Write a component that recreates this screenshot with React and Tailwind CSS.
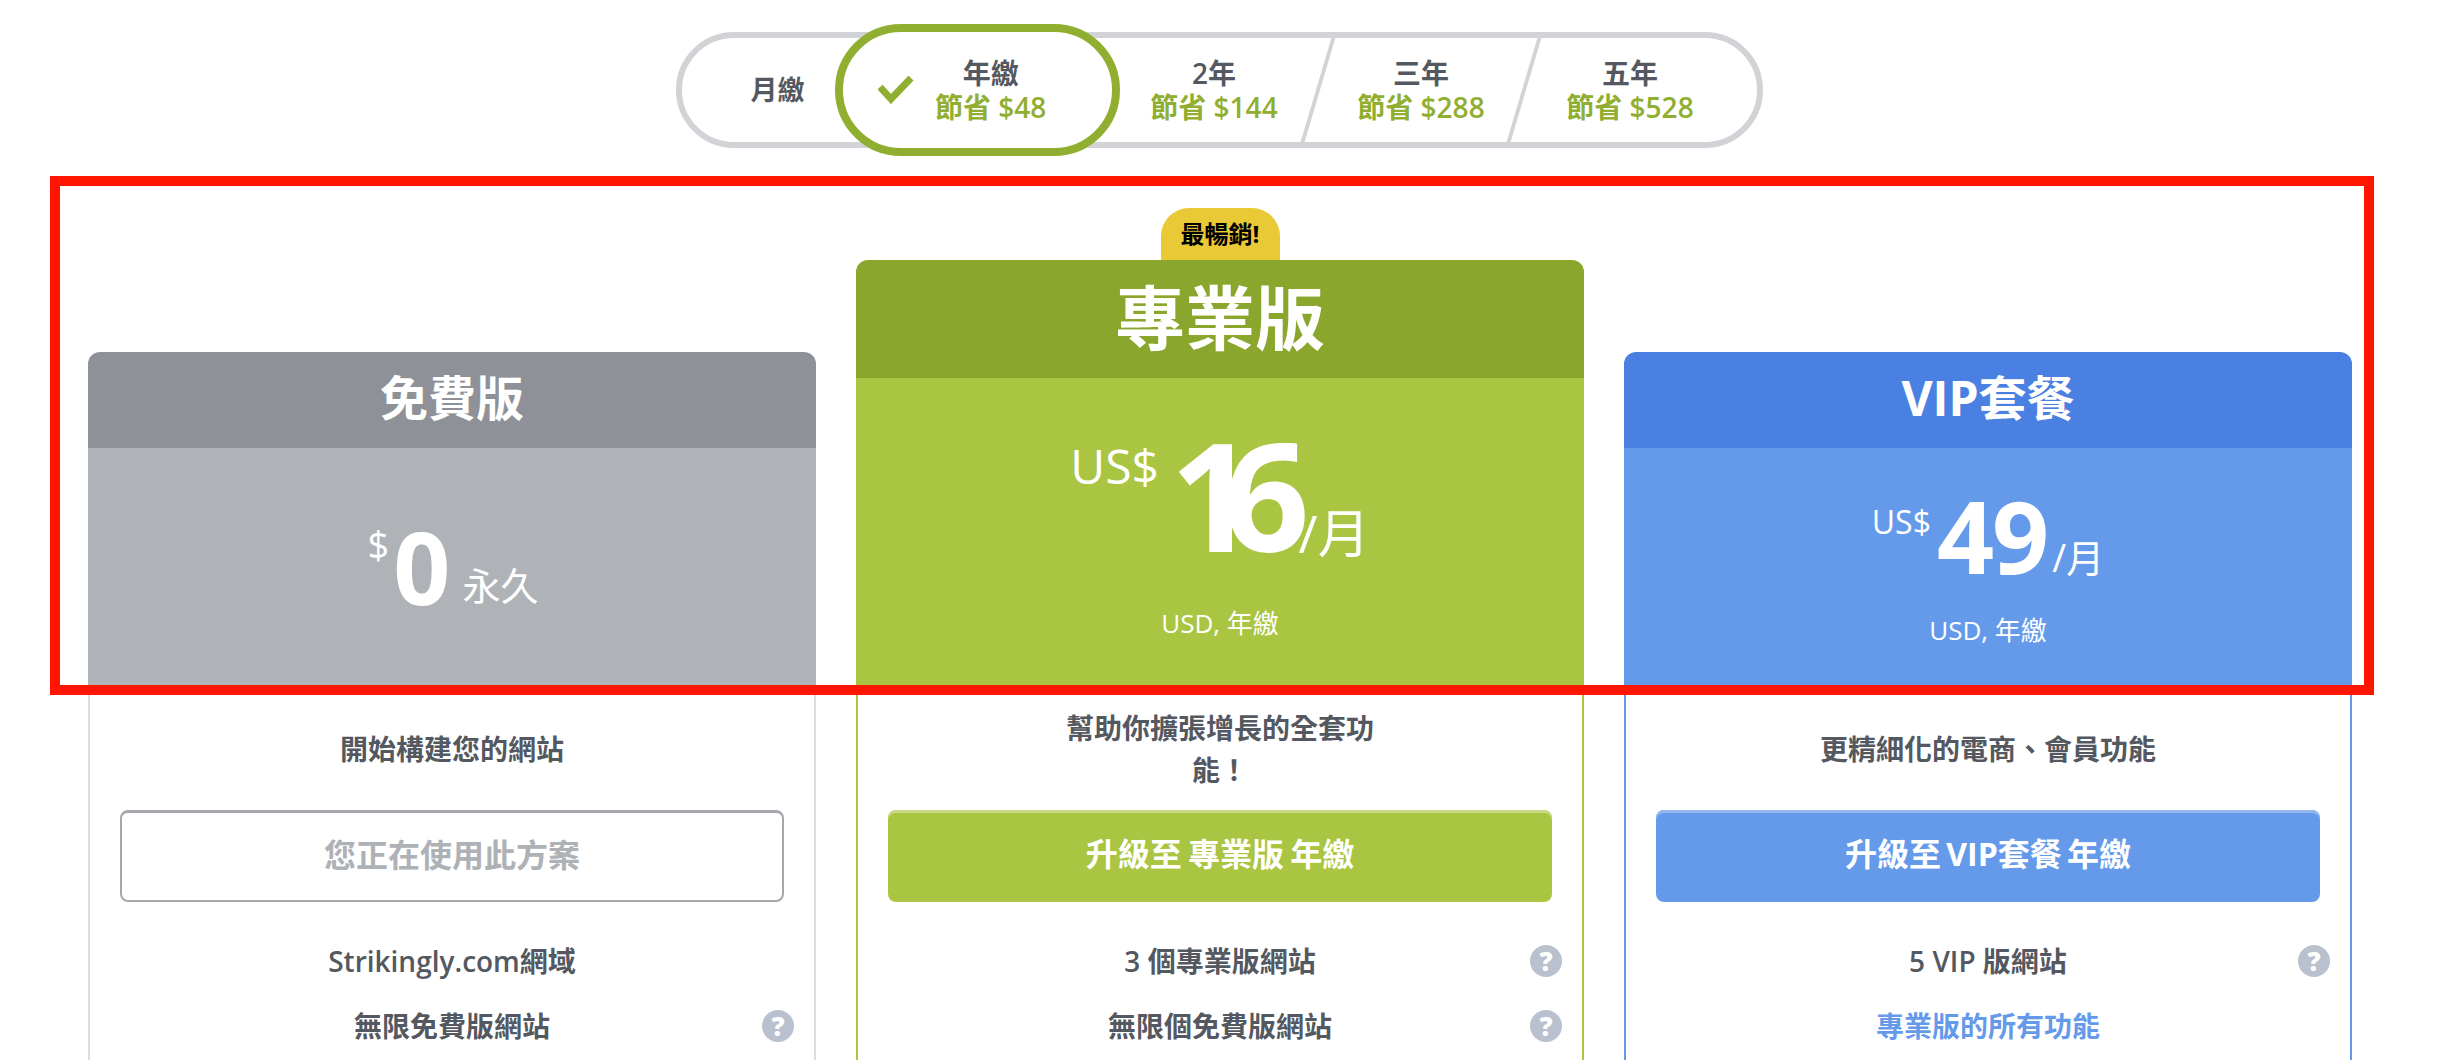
import React from 'react';

const FONT = "font-['Open_Sans','Noto_Sans_CJK_TC',sans-serif]";

function Help() {
  return <span className="absolute right-[20px] top-1/2 -translate-y-1/2 w-[32px] h-[32px] rounded-full bg-[#b9c0ce] text-white text-[26px] leading-[32px] font-extrabold text-center">?</span>;
}

function Row({ children, help, className = 'text-[#545860]' }) {
  return <div className={`relative h-[65px] flex items-center justify-center text-[28px] font-semibold ${className}`}>
      {children}
      {help && <Help />}
    </div>;
}

function Period({ top, save }) {
  return <div className="flex flex-col items-center text-[28px] leading-[34px] font-semibold">
      <span className="text-[#545860]">{top}</span>
      <span className="text-[#90ae2f]">{save}</span>
    </div>;
}

function Slash() {
  return <div className="w-[4px] self-stretch bg-[#d2d3d7] skew-x-[-16.5deg]"></div>;
}

function Toggle() {
  return <div className="ml-[676px] w-[1087px] h-[116px] border-[6px] border-[#d2d3d7] rounded-[58px] flex items-center bg-white">
      <div className="w-[153px] pl-[38px] flex justify-center text-[27px] font-semibold text-[#545860]">月繳</div>
      <div className="w-[285px] h-[132px] -my-[14px] border-[8px] border-[#90ae2f] rounded-[66px] bg-white flex items-center pl-[35px] gap-[21px]">
        <svg width="36" height="28" viewBox="0 0 36 28" fill="none" stroke="#90ae2f" strokeWidth="7">
          <polyline points="2,11 13,23 33,2" />
        </svg>
        <Period top="年繳" save="節省 $48" />
      </div>
      <div className="w-[196px] flex justify-center pr-[8px]"><Period top="2年" save="節省 $144" /></div>
      <Slash />
      <div className="w-[202px] flex justify-center"><Period top="三年" save="節省 $288" /></div>
      <Slash />
      <div className="flex-1 flex justify-center pr-[23px]"><Period top="五年" save="節省 $528" /></div>
    </div>;
}

function FreeCard() {
  return <div className="pt-[144px]">
      <div className="h-[96px] pb-[5px] bg-[#8e9298] rounded-t-[12px] flex items-center justify-center text-white text-[48px] font-bold">免費版</div>
      <div className="h-[244px] bg-[#afb2b6] text-white flex items-start justify-center pt-[48px] pl-[2px]">
        <span className="text-[38px] leading-[40px] mt-[28px]">$</span>
        <span className="text-[100px] leading-[136px] font-bold ml-[4px] mt-[2px]">0</span>
        <span className="text-[38px] leading-[50px] mt-[64px] ml-[12px]">永久</span>
      </div>
      <div className="border-x-2 border-[#dddddd] px-[30px] h-[400px]">
        <div className="h-[114px] mb-[4px] flex items-center justify-center text-[28px] font-semibold text-[#545860]">開始構建您的網站</div>
        <div className="h-[92px] pb-[4px] border-2 border-t-[3px] border-[#a5a8ac] rounded-[8px] flex items-center justify-center text-[32px] font-bold text-[#aeb1b5]">您正在使用此方案</div>
        <div className="mt-[26px] -mx-[30px]">
          <Row>Strikingly.com網域</Row>
          <Row help>無限免費版網站</Row>
        </div>
      </div>
    </div>;
}

function ProCard() {
  return <div>
      <div className="mx-auto w-[119px] h-[52px] bg-[#eac936] rounded-t-[28px] flex items-center justify-center text-[24px] font-bold text-black">最暢銷!</div>
      <div className="h-[118px] pb-[2px] bg-[#8ba62c] rounded-t-[12px] flex items-center justify-center text-white text-[70px] font-bold">專業版</div>
      <div className="h-[314px] bg-[#a9c542] text-white flex flex-col items-center pt-[34px]">
        <div className="flex items-start h-[150px]">
          <span className="text-[48px] leading-[60px] mt-[24px]">US$</span>
          <span className="text-[150px] leading-[150px] font-bold tracking-[-32px] ml-[11px] mt-[7px]">16</span>
          <span className="text-[52px] leading-[60px] mt-[91px] ml-[21px]">/月</span>
        </div>
        <div className="mt-[43px] text-[26px] leading-[36px]">USD, 年繳</div>
      </div>
      <div className="border-x-2 border-[#a9c542] px-[30px] h-[400px]">
        <div className="h-[114px] mb-[4px] flex items-center justify-center">
          <p className="w-[320px] text-center text-[28px] leading-[42px] font-semibold text-[#545860]">幫助你擴張增長的全套功能！</p>
        </div>
        <div className="h-[92px] pb-[4px] bg-[#a9c542] rounded-[8px] shadow-[inset_0_3px_0_#c6d987] flex items-center justify-center text-[32px] font-bold text-white [word-spacing:-2px]">升級至 專業版 年繳</div>
        <div className="mt-[26px] -mx-[30px]">
          <Row help>3 個專業版網站</Row>
          <Row help>無限個免費版網站</Row>
        </div>
      </div>
    </div>;
}

function VipCard() {
  return <div className="pt-[144px]">
      <div className="h-[96px] pb-[5px] bg-[#4a80e2] rounded-t-[12px] flex items-center justify-center text-white text-[48px] font-bold">VIP套餐</div>
      <div className="h-[244px] bg-[#659aea] text-white flex flex-col items-center pt-[29px]">
        <div className="flex items-start h-[110px]">
          <span className="text-[32px] leading-[44px] mt-[23px]">US$</span>
          <span className="text-[100px] leading-[110px] font-bold ml-[6px] mt-[3px] tracking-[-2px]">49</span>
          <span className="text-[38px] leading-[48px] mt-[56px] ml-[5px]">/月</span>
        </div>
        <div className="mt-[25px] text-[26px] leading-[36px]">USD, 年繳</div>
      </div>
      <div className="border-x-2 border-[#659aea] px-[30px] h-[400px]">
        <div className="h-[114px] mb-[4px] flex items-center justify-center text-[28px] font-semibold text-[#545860]">更精細化的電商、會員功能</div>
        <div className="h-[92px] pb-[4px] bg-[#659aea] rounded-[8px] shadow-[inset_0_3px_0_#93b8f0] flex items-center justify-center text-[32px] font-bold text-white [word-spacing:-3px]">升級至 VIP套餐 年繳</div>
        <div className="mt-[26px] -mx-[30px]">
          <Row help>5 VIP 版網站</Row>
          <Row className="text-[#659aea]">專業版的所有功能</Row>
        </div>
      </div>
    </div>;
}

export default function App() {
  return <div className={`relative h-[1060px] overflow-hidden bg-white pt-[32px] ${FONT}`}>
      <Toggle />
      <div className="mt-[60px] grid grid-cols-3 gap-10 pl-[88px] pr-[104px]">
        <FreeCard />
        <ProCard />
        <VipCard />
      </div>
      {/* 红色标注框 */}
      <div className="absolute left-[50px] top-[176px] w-[2324px] h-[519px] border-[10px] border-[#ff1500] pointer-events-none"></div>
    </div>;
}
